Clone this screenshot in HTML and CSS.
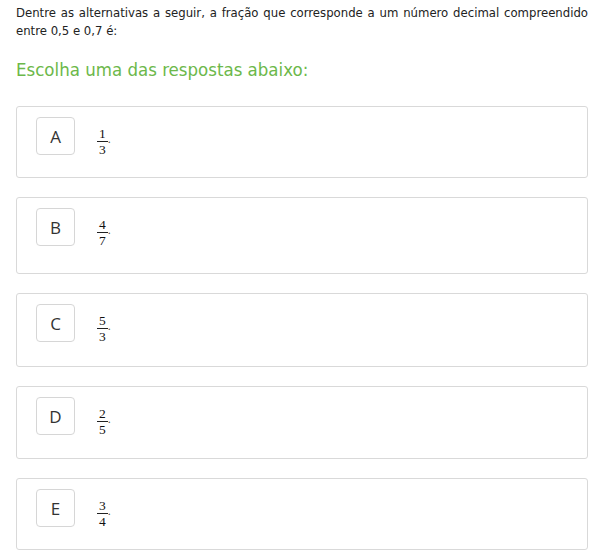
FILE: index.html
```html
<!DOCTYPE html>
<html lang="pt">
<head>
<meta charset="utf-8">
<link rel="stylesheet" href="styles.css">
</head>
<body>
<div class="page">
  <p class="question">Dentre as alternativas a seguir, a fração que corresponde a um número decimal compreendido entre 0,5 e 0,7 é:</p>
  <h2 class="prompt">Escolha uma das respostas abaixo:</h2>
  <div class="options">
    <div class="option h72"><span class="letter">A</span><span class="frac"><span class="num">1</span><span class="den">3</span></span><span class="dot">.</span></div>
    <div class="option h77"><span class="letter">B</span><span class="frac"><span class="num">4</span><span class="den">7</span></span><span class="dot">.</span></div>
    <div class="option h74"><span class="letter">C</span><span class="frac"><span class="num">5</span><span class="den">3</span></span><span class="dot">.</span></div>
    <div class="option h73"><span class="letter">D</span><span class="frac"><span class="num">2</span><span class="den">5</span></span><span class="dot">.</span></div>
    <div class="option h72"><span class="letter">E</span><span class="frac"><span class="num">3</span><span class="den">4</span></span><span class="dot">.</span></div>
  </div>
</div>
</body>
</html>
```
FILE: styles.css
```css
html, body {
  margin: 0;
  padding: 0;
  background: #ffffff;
}
.page {
  padding: 4px 12px 0 16px;
  font-family: "DejaVu Sans Condensed", "DejaVu Sans", sans-serif;
  color: #222;
}
.question {
  margin: 0;
  font-size: 13px;
  line-height: 18px;
  text-align: justify;
}
.prompt {
  margin: 19px 0 0 0;
  font-size: 18.5px;
  font-weight: normal;
  color: #6cb84a;
  line-height: 22px;
}
.options {
  margin-top: 25px;
  display: flex;
  flex-direction: column;
  gap: 19px;
}
.option {
  box-sizing: border-box;
  border: 1px solid #d9d9d9;
  border-radius: 3px;
  padding: 10px 19px;
  display: flex;
  align-items: flex-start;
}
.h72 { height: 72px; }
.h73 { height: 73px; }
.h74 { height: 74px; }
.h77 { height: 77px; }
.letter {
  box-sizing: border-box;
  width: 39px;
  height: 38px;
  border: 1px solid #d6d6d6;
  border-radius: 4px;
  display: flex;
  align-items: center;
  justify-content: center;
  font-family: "Open Sans", "DejaVu Sans", sans-serif;
  font-size: 17px;
  color: #333;
}
.frac {
  margin-left: 22px;
  margin-top: 10px;
  display: inline-flex;
  flex-direction: column;
  align-items: center;
  font-family: "Liberation Serif", serif;
  font-size: 13.5px;
  line-height: 13px;
  color: #111;
}
.num {
  border-bottom: 1px solid #222;
  padding: 0 2px 1px;
}
.den {
  padding-top: 1px;
}
.dot {
  font-family: "Liberation Serif", serif;
  font-size: 12px;
  line-height: 12px;
  color: #555;
  margin-top: 16px;
}
```
